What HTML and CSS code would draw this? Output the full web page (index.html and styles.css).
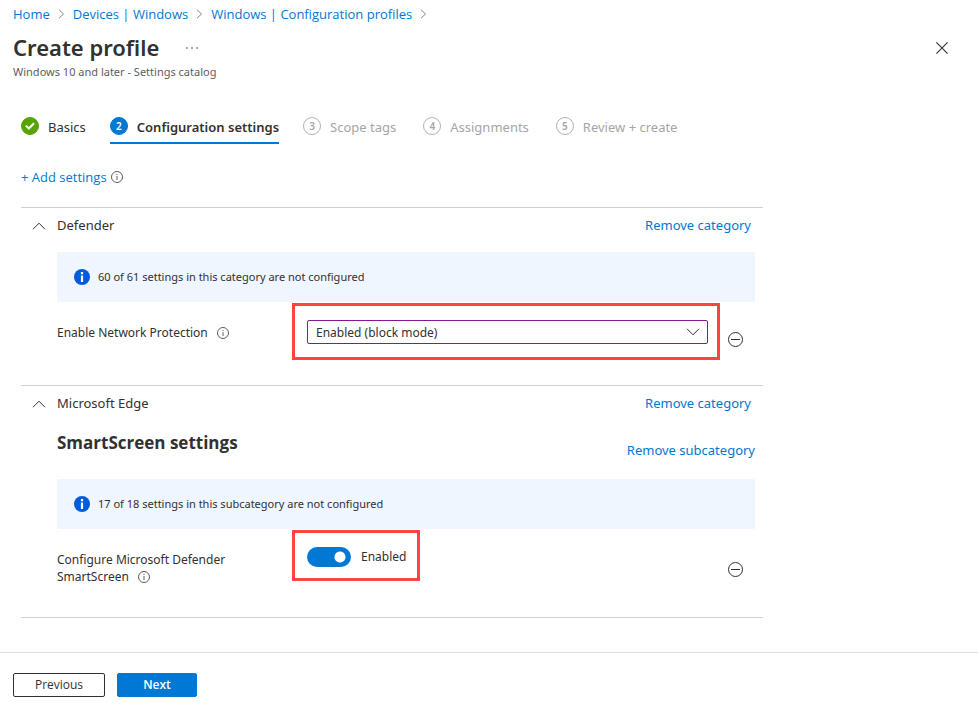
FILE: index.html
```html
<!DOCTYPE html>
<html lang="en">
<head>
<meta charset="utf-8">
<meta name="viewport" content="width=device-width, initial-scale=1">
<title>Create profile</title>
<link rel="stylesheet" href="styles.css">
</head>
<body>
<svg class="defs" aria-hidden="true">
  <symbol id="sep" viewBox="0 0 7 10"><path d="M1 .8 5.6 5 1 9.2" fill="none" stroke="#8a8886"/></symbol>
  <symbol id="info" viewBox="0 0 12 12"><circle cx="6" cy="6" r="5.5" fill="none" stroke="#605e5c"/><path d="M6 5v4M6 3v1" stroke="#605e5c"/></symbol>
  <symbol id="info-solid" viewBox="0 0 16 16"><circle cx="8" cy="8" r="8" fill="#015cda"/><path d="M8 6.5V13M8 3v2.2" stroke="#fff" stroke-width="2.2"/></symbol>
  <symbol id="up" viewBox="0 0 14 8"><path d="M1 7.2 7 1.2l6 6" fill="none" stroke="#323130"/></symbol>
  <symbol id="minus" viewBox="0 0 16 16"><circle cx="8.5" cy="8.5" r="7" fill="none" stroke="#323130"/><path d="M4 8.5h9" stroke="#323130"/></symbol>
</svg>

<header class="header">
  <nav class="breadcrumb" aria-label="Breadcrumb">
    <a href="#">Home</a>
    <svg class="sep"><use href="#sep"/></svg>
    <a href="#">Devices | Windows</a>
    <svg class="sep"><use href="#sep"/></svg>
    <a href="#">Windows | Configuration profiles</a>
    <svg class="sep"><use href="#sep"/></svg>
  </nav>
  <div class="title-bar">
    <h1>Create profile</h1>
    <button class="icon-button more" type="button" aria-label="More">
      <svg width="12" height="2" viewBox="0 0 12 2"><path d="M0 .5h2v1H0zM5 .5h2v1H5zM10 .5h2v1h-2z" fill="#605e5c"/></svg>
    </button>
    <button class="icon-button close" type="button" aria-label="Close">
      <svg width="12" height="12" viewBox="0 0 12 12"><path d="m.4.4 11.2 11.2M11.6.4.4 11.6" stroke="#323130" stroke-width="1.1"/></svg>
    </button>
  </div>
  <p class="subtitle">Windows 10 and later - Settings catalog</p>
</header>

<main class="content">
  <nav class="steps" aria-label="Steps">
    <a class="step done" href="#"><span class="badge"><svg width="10" height="8" viewBox="0 0 10 8"><path d="m.9 3.6 2.9 2.9L9.1 1.2" fill="none" stroke="#fff" stroke-width="2"/></svg></span>Basics</a>
    <a class="step current" href="#" aria-current="step"><span class="badge">2</span>Configuration settings</a>
    <a class="step" href="#"><span class="badge">3</span>Scope tags</a>
    <a class="step" href="#"><span class="badge">4</span>Assignments</a>
    <a class="step" href="#"><span class="badge">5</span>Review + create</a>
  </nav>

  <div class="add"><a href="#">+ Add settings</a><svg class="info"><use href="#info"/></svg></div>

  <section class="category">
    <div class="category-head">
      <button class="icon-button" type="button" aria-label="Collapse Defender"><svg class="up"><use href="#up"/></svg></button>
      <h2>Defender</h2>
      <a href="#">Remove category</a>
    </div>
    <div class="category-body">
      <p class="notice"><svg class="info-solid"><use href="#info-solid"/></svg>60 of 61 settings in this category are not configured</p>
      <div class="setting">
        <label class="name" for="network">Enable Network Protection <svg class="info"><use href="#info"/></svg></label>
        <div class="callout wide">
          <div class="select">
            <select id="network"><option>Enabled (block mode)</option></select>
            <svg class="down"><use href="#up"/></svg>
          </div>
        </div>
        <button class="icon-button remove" type="button" aria-label="Remove setting"><svg class="minus"><use href="#minus"/></svg></button>
      </div>
    </div>
  </section>

  <section class="category">
    <div class="category-head">
      <button class="icon-button" type="button" aria-label="Collapse Microsoft Edge"><svg class="up"><use href="#up"/></svg></button>
      <h2>Microsoft Edge</h2>
      <a href="#">Remove category</a>
    </div>
    <div class="category-body">
      <div class="sub-head">
        <h3>SmartScreen settings</h3>
        <a href="#">Remove subcategory</a>
      </div>
      <p class="notice"><svg class="info-solid"><use href="#info-solid"/></svg>17 of 18 settings in this subcategory are not configured</p>
      <div class="setting">
        <label class="name" for="smartscreen">Configure Microsoft Defender SmartScreen <svg class="info"><use href="#info"/></svg></label>
        <div class="callout">
          <label class="switch"><input id="smartscreen" type="checkbox" role="switch" checked>Enabled</label>
        </div>
        <button class="icon-button remove" type="button" aria-label="Remove setting"><svg class="minus"><use href="#minus"/></svg></button>
      </div>
    </div>
  </section>
</main>

<footer class="footer">
  <button class="button previous" type="button">Previous</button>
  <button class="button next" type="button">Next</button>
</footer>
</body>
</html>
```
FILE: styles.css
```css
* {
  box-sizing: border-box;
}

body {
  display: flex;
  flex-direction: column;
  min-height: 100vh;
  margin: 0;
  background: #fff;
  color: #323130;
  font: 13px/18px "Noto Sans", "Open Sans", sans-serif;
}

h1, h2, h3, p {
  margin: 0;
}

a {
  color: #0078d4;
  text-decoration: none;
}

svg {
  display: block;
  flex: none;
}

.defs {
  position: absolute;
  width: 0;
  height: 0;
}

.icon-button {
  display: flex;
  align-items: center;
  justify-content: center;
  padding: 0;
  border: 0;
  background: none;
}

.header {
  padding: 5px 13px 0;
}

.breadcrumb {
  display: flex;
  align-items: center;
  gap: 8px;
  font-family: "Open Sans", "Noto Sans", sans-serif;
}

.sep {
  width: 7px;
  height: 10px;
}

.title-bar {
  display: flex;
  align-items: center;
  margin-top: 9px;
}

h1 {
  padding-bottom: 2px;
  font-size: 22px;
  font-weight: 600;
  line-height: 30px;
}

.more {
  margin-left: 27px;
}

.close {
  width: 32px;
  height: 32px;
  margin-right: 7px;
  margin-left: auto;
}

.subtitle {
  color: #605e5c;
  font-size: 11px;
  line-height: 16px;
}

.content {
  width: 100%;
  max-width: 784px;
  padding: 36px 21px 0;
}

.steps {
  display: flex;
  gap: 24px;
}

.step {
  display: flex;
  gap: 9px;
  height: 28px;
  color: #a6a5a4;
  line-height: 22px;
  white-space: nowrap;
}

.current ~ .step + .step {
  margin-left: 3px;
}

.badge {
  display: flex;
  align-items: center;
  justify-content: center;
  width: 18px;
  height: 18px;
  margin-top: 1px;
  border: 1px solid #b3b0ad;
  border-radius: 50%;
  font-size: 10px;
  font-weight: 600;
}

.done,
.current {
  color: #323130;
}

.done .badge {
  border-color: #57a300;
  background: #57a300;
}

.current {
  border-bottom: 2px solid #0078d4;
  font-weight: 600;
}

.current .badge {
  border-color: #0078d4;
  background: #0078d4;
  color: #fff;
}

.add {
  display: flex;
  align-items: center;
  gap: 4px;
  margin: 24px 0 21px;
}

.add a {
  font-family: "Open Sans", "Noto Sans", sans-serif;
}

.info {
  width: 12px;
  height: 12px;
}

.category {
  padding-bottom: 10px;
  border-top: 1px solid #d2d0ce;
}

.category:last-child {
  padding-bottom: 9px;
  border-bottom: 1px solid #d2d0ce;
}

.category-head {
  display: flex;
  align-items: center;
  padding: 8px 12px 8px 0;
}

.category-head .icon-button {
  width: 36px;
  padding-top: 2px;
}

.category-head h2 {
  flex: 1;
  font-size: 13px;
  font-weight: 400;
}

.up,
.down {
  width: 14px;
  height: 8px;
}

.category-body {
  padding: 10px 8px 0 36px;
}

.sub-head {
  display: flex;
  align-items: flex-end;
  justify-content: space-between;
  padding: 2px 0 20px;
}

h3 {
  padding-bottom: 5px;
  font: 700 17px/22px "Open Sans", "Noto Sans", sans-serif;
}

.notice {
  display: flex;
  align-items: center;
  gap: 8px;
  height: 50px;
  padding-left: 17px;
  border-radius: 2px;
  background: #eff6ff;
  font-size: 11px;
}

.info-solid,
.minus {
  width: 16px;
  height: 16px;
}

.setting {
  display: grid;
  grid-template-columns: 235px 1fr 35px;
  align-items: start;
  margin-top: 1px;
}

.name {
  padding: 21px 40px 23px 0;
  font-size: 12px;
  line-height: 17px;
}

.name .info {
  display: inline-block;
  margin-left: 6px;
  vertical-align: -2px;
}

.callout {
  justify-self: start;
  margin-bottom: 15px;
  padding: 14px 11px 11px 12px;
  border: 3px solid #fd4343;
}

.wide {
  justify-self: stretch;
  padding-right: 9px;
  padding-bottom: 13px;
}

.select {
  display: grid;
  align-items: center;
}

.select > * {
  grid-area: 1 / 1;
}

select {
  width: 100%;
  height: 24px;
  padding: 1px 8px 0;
  border: 1px solid #881798;
  border-radius: 2px;
  appearance: none;
  background: #fff;
  color: inherit;
  font: inherit;
  font-size: 12px;
}

.down {
  justify-self: end;
  margin-right: 8px;
  transform: rotate(180deg);
  pointer-events: none;
}

.remove {
  align-self: center;
  justify-self: end;
  width: 16px;
  margin-right: 12px;
}

.switch {
  display: flex;
  align-items: center;
  gap: 10px;
  font-size: 12px;
}

.switch input {
  width: 44px;
  height: 20px;
  margin: 0;
  border-radius: 10px;
  appearance: none;
  background: radial-gradient(circle at 33px 10px, #fff 5px, transparent 6px) #0078d4;
}

.footer {
  display: flex;
  gap: 12px;
  margin-top: auto;
  padding: 20px 13px 18px;
  border-top: 1px solid #e1dfdd;
}

.button {
  height: 24px;
  padding: 0;
  border: 1px solid #323130;
  border-radius: 2px;
  background: #fff;
  color: #323130;
  font: 600 12px/18px "Open Sans", "Noto Sans", sans-serif;
}

.previous {
  width: 92px;
  font-weight: 500;
}

.next {
  width: 80px;
  border-color: #0078d4;
  background: #0078d4;
  color: #fff;
}
```
